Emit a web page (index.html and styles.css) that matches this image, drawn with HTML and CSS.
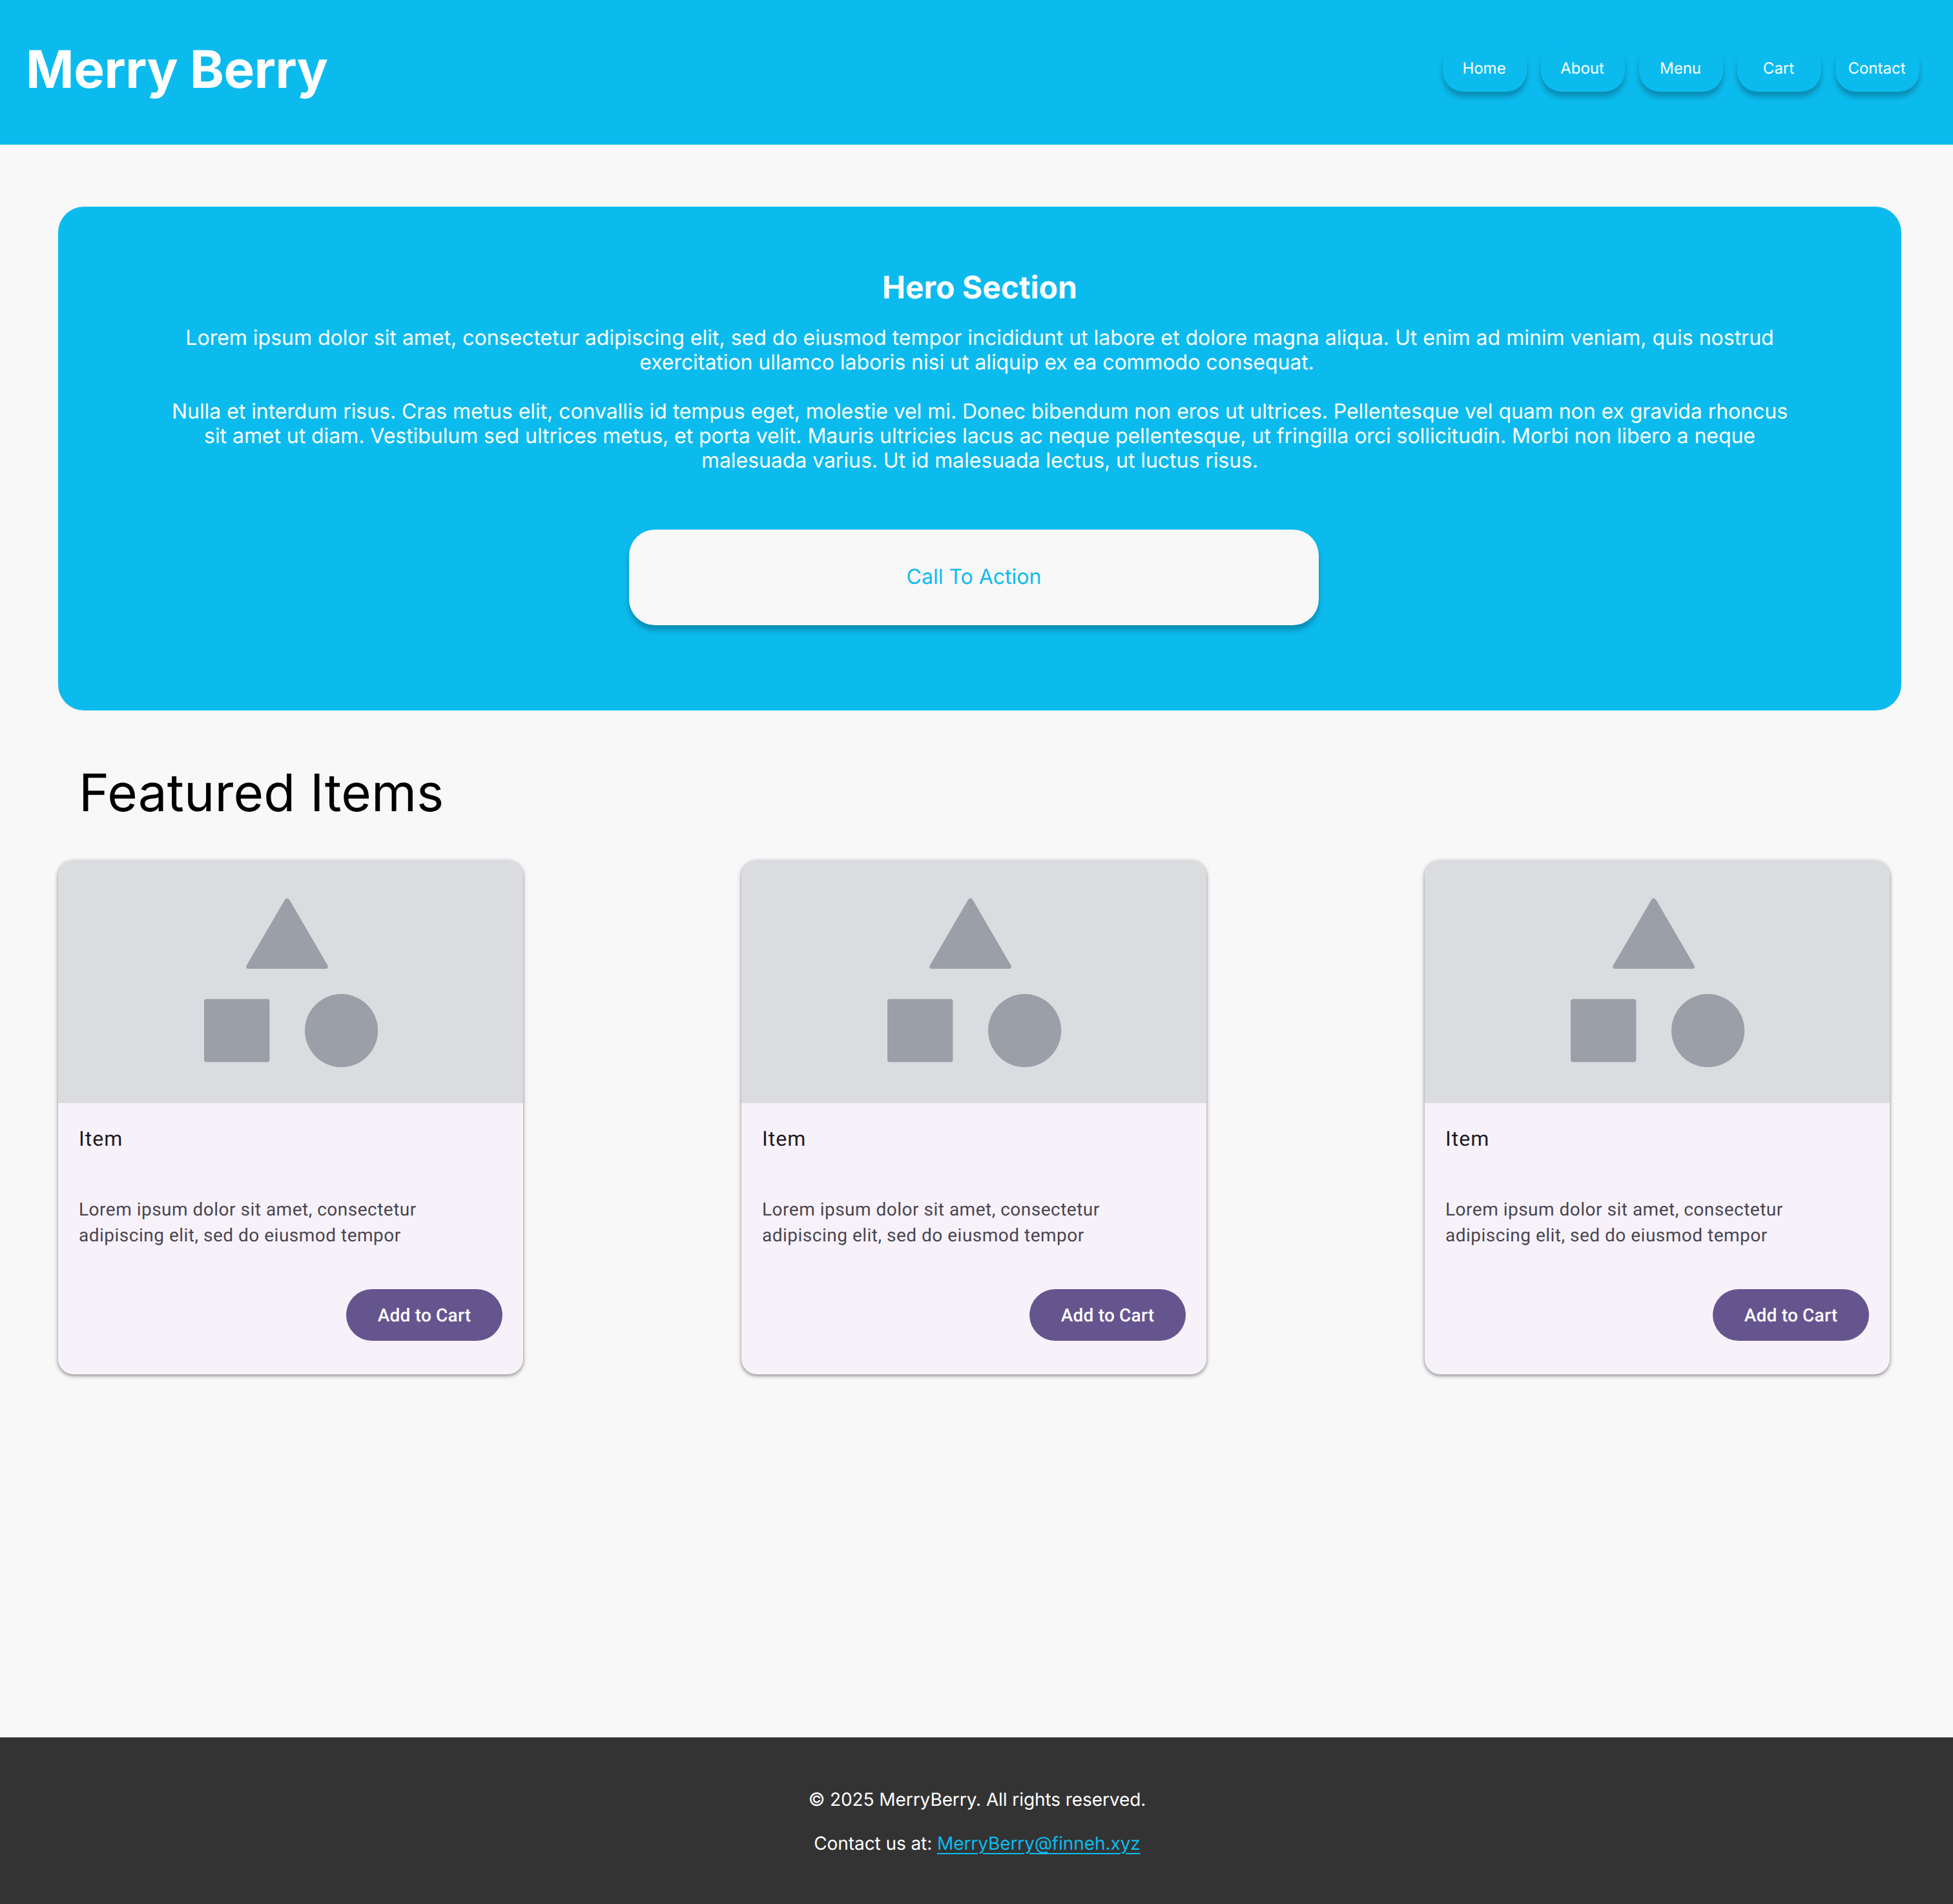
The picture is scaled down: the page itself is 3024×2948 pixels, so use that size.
FILE: index.html
```html
<!DOCTYPE html>
<html lang="en">
<head>
<meta charset="utf-8">
<title>Merry Berry</title>
<link rel="stylesheet" href="styles.css">
</head>
<body>
<svg width="0" height="0" class="defs" aria-hidden="true">
  <symbol id="shapes" viewBox="0 0 720 376">
    <path d="M351.2 60.8Q354.6 56.6 358 60.8L417.2 162.6Q419.4 167.8 414.6 168H294.600Q289.800 167.800 292 162.600Z"/>
    <rect x="226" y="214.700" width="101.400" height="97.800" rx="4"/>
    <circle cx="438.600" cy="263.700" r="56.600"/>
  </symbol>
</svg>
<header class="header">
  <h1 class="brand">Merry Berry</h1>
  <nav class="nav">
    <a class="nav-link">Home</a>
    <a class="nav-link">About</a>
    <a class="nav-link">Menu</a>
    <a class="nav-link">Cart</a>
    <a class="nav-link">Contact</a>
  </nav>
</header>
<main class="main">
  <section class="hero">
    <h2 class="hero-title">Hero Section</h2>
    <p class="hero-text">Lorem ipsum dolor sit amet, consectetur adipiscing elit, sed do eiusmod tempor incididunt ut labore et dolore magna aliqua. Ut enim ad minim veniam, quis nostrud<br><span class="tight">exercitation ullamco laboris nisi ut aliquip ex ea commodo consequat.&nbsp;<br><br>Nulla et interdum risus. Cras metus elit, convallis id tempus eget, molestie vel mi. Donec bibendum non eros ut ultrices. Pellentesque vel quam non ex gravida rhoncus<br>sit amet ut diam. Vestibulum sed ultrices metus, et porta velit. Mauris ultricies lacus ac neque pellentesque, ut fringilla orci sollicitudin. Morbi non libero a neque<br>malesuada varius. Ut id malesuada lectus, ut luctus risus.</span></p>
    <a class="cta">Call To Action</a>
  </section>
  <h2 class="section-title">Featured Items</h2>
  <div class="cards">
    <article class="card">
      <svg class="media"><use href="#shapes"/></svg>
      <div class="card-body">
        <h3 class="card-title">Item</h3>
        <p class="card-text">Lorem ipsum dolor sit amet, consectetur<br>adipiscing elit, sed do eiusmod tempor</p>
        <button class="card-button">Add to Cart</button>
      </div>
    </article>
    <article class="card">
      <svg class="media"><use href="#shapes"/></svg>
      <div class="card-body">
        <h3 class="card-title">Item</h3>
        <p class="card-text">Lorem ipsum dolor sit amet, consectetur<br>adipiscing elit, sed do eiusmod tempor</p>
        <button class="card-button">Add to Cart</button>
      </div>
    </article>
    <article class="card">
      <svg class="media"><use href="#shapes"/></svg>
      <div class="card-body">
        <h3 class="card-title">Item</h3>
        <p class="card-text">Lorem ipsum dolor sit amet, consectetur<br>adipiscing elit, sed do eiusmod tempor</p>
        <button class="card-button">Add to Cart</button>
      </div>
    </article>
  </div>
</main>
<footer class="footer">
  <p>© 2025 MerryBerry. All rights reserved.</p>
  <p>Contact us at: <a class="mail">MerryBerry@finneh.xyz</a></p>
</footer>
</body>
</html>
```
FILE: styles.css
```css
* { box-sizing: border-box; margin: 0; padding: 0; }

body {
  display: flex;
  flex-direction: column;
  min-height: 2948px;
  background: #f8f8f8;
  font-family: Inter, sans-serif;
  font-optical-sizing: none;
  font-variation-settings: "opsz" 14;
  text-rendering: geometricPrecision;
}

.defs { position: absolute; }

.header {
  display: flex;
  justify-content: space-between;
  align-items: flex-start;
  height: 224px;
  padding: 58px 52px 0 40px;
  background: #0cbbee;
  color: #fff;
}
.brand {
  padding-top: 1px;
  font-size: 80px;
  line-height: 98px;
  font-weight: 700;
  letter-spacing: -.4px;
  white-space: nowrap;
}
.nav { display: flex; gap: 22px; padding-top: 10px; }
.nav-link {
  display: flex;
  align-items: center;
  justify-content: center;
  width: 130px;
  height: 74px;
  padding-right: 2px;
  border-radius: 32px;
  background: #0cbbee;
  box-shadow: 0 8px 8px rgba(0, 0, 0, .25);
  font-size: 24px;
}

.main { flex: 1; padding: 96px 80px 0 90px; }

.hero {
  display: flex;
  flex-direction: column;
  align-items: center;
  height: 780px;
  padding-top: 96px;
  border-radius: 40px;
  background: #0cbbee;
  color: #fff;
}
.hero-title { font-size: 48px; line-height: 58px; font-weight: 700; }
.hero-text {
  margin-top: 30px;
  font-size: 32px;
  line-height: 38px;
  text-align: center;
  white-space: nowrap;
}
.tight { letter-spacing: -.055px; }
.cta {
  display: flex;
  align-items: center;
  justify-content: center;
  width: 1068px;
  height: 148px;
  margin: 88px 18px 0 0;
  padding-bottom: 3px;
  border-radius: 40px;
  background: #f8f8f8;
  box-shadow: 0 8px 8px rgba(0, 0, 0, .25);
  color: #0cbbee;
  font-size: 32px;
}

.section-title {
  padding: 79px 0 0 32px;
  color: #000;
  font-size: 80px;
  line-height: 98px;
  font-weight: 400;
  letter-spacing: .12px;
}

.cards { display: flex; gap: 338px; margin-top: 55px; }
.card {
  width: 720px;
  height: 796px;
  overflow: hidden;
  border-radius: 24px;
  background: #f7f2fa;
  box-shadow: 0 2px 6px 2px rgba(0, 0, 0, .15), 0 2px 4px rgba(0, 0, 0, .3);
  font-family: Roboto, sans-serif;
}
.media { display: block; width: 720px; height: 376px; background: #dbdce0; fill: #9b9fa7; }
.card-body { display: flex; flex-direction: column; padding: 31px 32px 32px; }
.card-title { color: #1d1b20; font-size: 32px; line-height: 48px; font-weight: 400; letter-spacing: 1px; }
.card-text { margin-top: 66px; color: #49454f; font-size: 28px; line-height: 40px; letter-spacing: .5px; }
.card-button {
  align-self: flex-end;
  width: 242px;
  height: 80px;
  margin-top: 63px;
  padding-top: 1px;
  border: 0;
  border-radius: 40px;
  background: #65558f;
  color: #fff;
  font: 500 28px/40px Roboto, sans-serif;
  letter-spacing: .2px;
  text-rendering: inherit;
}

.footer {
  display: flex;
  flex-direction: column;
  gap: 34px;
  height: 258px;
  padding: 79px 0 0 2px;
  background: #333;
  color: #fff;
  font-size: 28px;
  line-height: 34px;
  letter-spacing: -.08px;
  text-align: center;
}
.mail {
  color: #0cbbee;
  text-decoration: underline;
  text-decoration-thickness: 2px;
  text-underline-offset: 5px;
}
```
